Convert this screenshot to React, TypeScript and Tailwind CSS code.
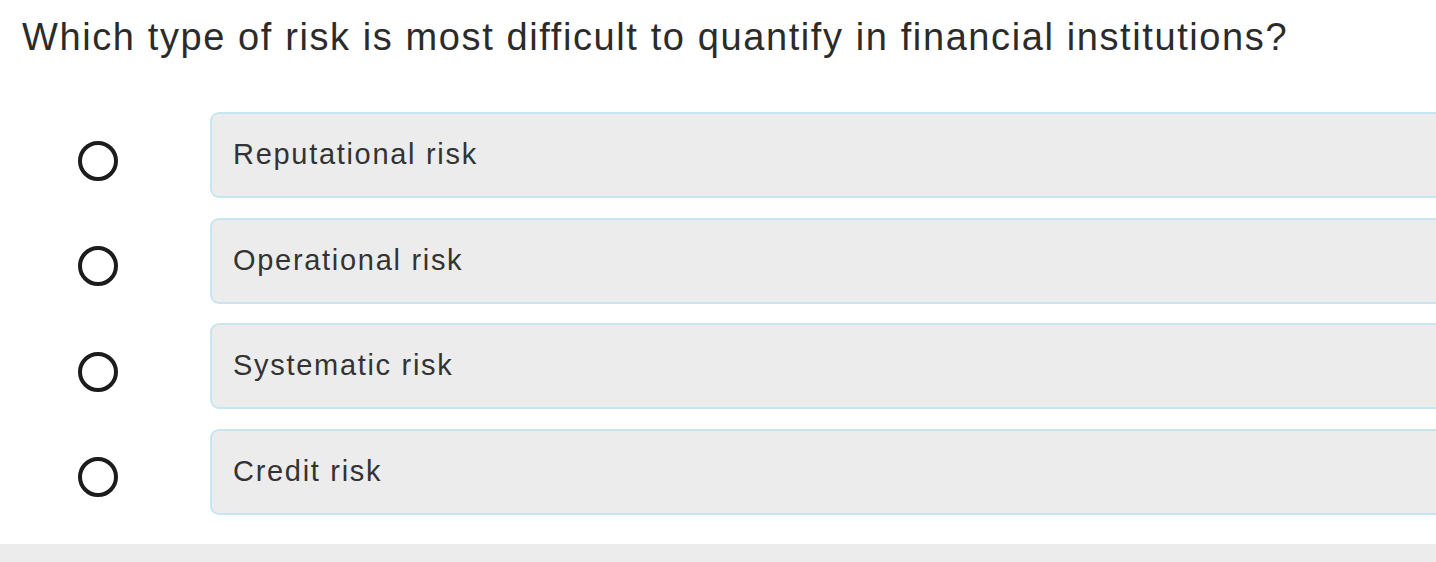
import React from 'react';

const options = ['Reputational risk', 'Operational risk', 'Systematic risk', 'Credit risk'];

const App = () => {
  return (
    <div className="w-[1436px] h-[562px] overflow-hidden bg-white font-['Liberation_Sans',Arial,sans-serif] flex flex-col">
      <h1 className="pl-[22px] pt-[12px] text-[38px] leading-[50px] tracking-[1.6px] text-[#2b2b2b] whitespace-nowrap">
        Which type of risk is most difficult to quantify in financial institutions?
      </h1>

      <div className="mt-[50px] flex flex-col gap-[19.5px]">
        {options.map((opt) => (
          <div key={opt} className="flex items-center">
            <div className="w-[210px] flex justify-center pr-[14px] pt-[11px]">
              <span className="block w-[40px] h-[40px] rounded-full border-[4px] border-[#1c1c1c]"></span>
            </div>
            <div className="flex-1 -mr-[20px] h-[86px] flex items-center pl-[21px] bg-[#ececec] border-2 border-[#c6e6f2] rounded-[9px] text-[29px] tracking-[1.7px] text-[#333333]">
              {opt}
            </div>
          </div>
        ))}
      </div>

      <div className="mt-auto h-[18px] bg-[#edeced]"></div>
    </div>
  );
};

export default App;
